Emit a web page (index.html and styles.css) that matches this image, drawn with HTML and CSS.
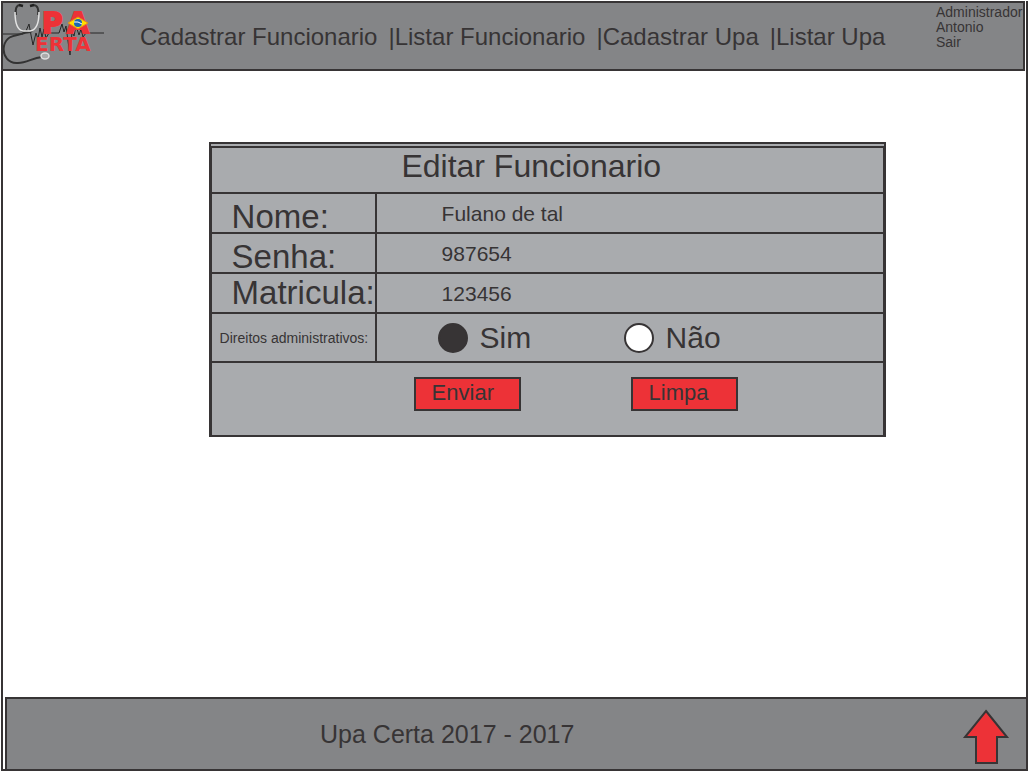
FILE: index.html
```html
<!DOCTYPE html>
<html lang="pt-BR">
<head>
<meta charset="utf-8">
<meta name="viewport" content="width=device-width, initial-scale=1">
<title>Editar Funcionario</title>
<link rel="stylesheet" href="styles.css">
</head>
<body>
<div class="page" id="topo">
  <header class="header">
    <a class="logo" href="#">
      <svg viewBox="0 0 108 66" width="108" height="66" role="img">
        <path class="pulse" d="M0 31h20l3-3 3-7 2 11 2 10 3-12 2 6 2-11 2 9 2-8 2 9 3-5h10l3-9 2 8 2-6 2 15 2 14 2-23 2 4 2-10 3 9 2-6 2 8 3-4h18"/>
        <path class="tube" d="M25 28C18 34 4 29 1 43c-2 10 5 18 14 17 9 0 14-5 24-6"/>
        <path class="tube" d="M17 2c-4 0-5 5-4 10M30 2c5 0 6 5 5 10M19 28c2 2 8 2 10 0"/>
        <path class="steel" d="M12 9c0 9 2 18 8 19h7c7-1 9-10 9-19"/>
        <path class="tips" d="M16 2l4 1M27 3l4-1"/>
        <text class="logo-top" x="39" y="30">P</text>
        <text class="logo-top" x="64" y="30">A</text>
        <path class="flag-diamond" d="M65 20l10-6 10 6-10 6z"/>
        <circle class="flag-globe" cx="75" cy="20" r="4"/>
        <path class="flag-band" d="M71 19q4-1 8 2"/>
        <text class="logo-bottom" x="32" y="48">ERTA</text>
        <ellipse class="bell" cx="42" cy="53" rx="4" ry="3"/>
      </svg>
    </a>
    <nav class="nav">
      <a href="#">Cadastrar Funcionario</a>
      <a href="#">|Listar Funcionario</a>
      <a href="#">|Cadastrar Upa</a>
      <a href="#">|Listar Upa</a>
    </nav>
    <div class="user">
      <span>Administrador</span>
      <span>Antonio</span>
      <a href="#">Sair</a>
    </div>
  </header>

  <main class="main">
    <form class="form">
      <table class="grid">
        <colgroup><col class="col-label"><col></colgroup>
        <thead>
          <tr><th class="title" colspan="2"><h1>Editar Funcionario</h1></th></tr>
        </thead>
        <tbody>
          <tr>
            <th class="label low" scope="row"><label for="nome">Nome:</label></th>
            <td><input class="field" id="nome" type="text" value="Fulano de tal"></td>
          </tr>
          <tr>
            <th class="label low" scope="row"><label for="senha">Senha:</label></th>
            <td><input class="field" id="senha" type="text" value="987654"></td>
          </tr>
          <tr>
            <th class="label" scope="row"><label for="matricula">Matricula:</label></th>
            <td><input class="field" id="matricula" type="text" value="123456"></td>
          </tr>
          <tr class="rights">
            <th class="label small" scope="row" id="direitos">Direitos administrativos:</th>
            <td>
              <div class="options" role="radiogroup" aria-labelledby="direitos">
                <label class="option"><input type="radio" name="direitos" checked>Sim</label>
                <label class="option"><input type="radio" name="direitos">Não</label>
              </div>
            </td>
          </tr>
          <tr>
            <td class="actions-cell" colspan="2">
              <div class="actions">
                <button type="submit">Enviar</button>
                <button type="reset">Limpa</button>
              </div>
            </td>
          </tr>
        </tbody>
      </table>
    </form>
  </main>

  <footer class="footer">
    <p>Upa Certa 2017 - 2017</p>
    <a class="to-top" href="#topo" aria-label="Voltar ao topo">
      <svg viewBox="0 0 48 56" width="48" height="56"><path d="M24 2L45 28H35V54H14V28H3Z"/></svg>
    </a>
  </footer>
</div>
</body>
</html>
```

FILE: styles.css
```css
:root {
  --ink: #373435;
  --bar: #848587;
  --panel: #a9abae;
  --red: #ed3237;
}

* {
  box-sizing: border-box;
}

body {
  margin: 0;
  padding: 1px 1px 0;
  background: #fff;
  color: var(--ink);
  font-family: "Liberation Sans", Arial, sans-serif;
}

a {
  color: inherit;
  text-decoration: none;
}

.page {
  display: flex;
  flex-direction: column;
  min-height: calc(100vh - 2px);
  border: 2px solid var(--ink);
  border-top: 0;
}

.header {
  display: flex;
  min-height: 70px;
  margin-right: 1px;
  background: var(--bar);
  border: 2px solid var(--ink);
  border-width: 2px 2px 2px 0;
}

.logo {
  flex: none;
  width: 137px;
}

.logo svg {
  display: block;
}

.pulse,
.tube,
.steel,
.tips,
.flag-band {
  fill: none;
}

.pulse {
  stroke: #262626;
  stroke-width: 1;
}

.tube {
  stroke: #333;
  stroke-width: 2;
}

.steel {
  stroke: #e4e4e4;
  stroke-width: 1.5;
}

.tips {
  stroke: #222;
  stroke-width: 2.5;
}

.logo-top,
.logo-bottom {
  fill: var(--red);
  font-family: "DejaVu Sans", sans-serif;
  font-weight: bold;
}

.logo-top {
  stroke: var(--red);
  stroke-width: 2;
  font-size: 28px;
}

.logo-bottom {
  font-size: 20px;
}

.flag-diamond {
  fill: #ffe000;
  stroke: #e08a20;
  stroke-width: 1;
}

.flag-globe {
  fill: #1768b3;
}

.flag-band {
  stroke: #fff;
  stroke-width: 1;
}

.bell {
  fill: #aaa;
  stroke: #ddd;
  stroke-width: 1.5;
}

.nav {
  display: flex;
  flex: 1;
  align-items: center;
  gap: 11px;
  padding-top: 2px;
  font-size: 24px;
  line-height: 28px;
  white-space: nowrap;
}

.user {
  display: flex;
  flex: none;
  flex-direction: column;
  width: 87px;
  padding-top: 2px;
  font-size: 14px;
  line-height: 15px;
}

.main {
  flex: 1;
  padding: 71px 0 40px;
}

.form {
  width: 66.2%;
  margin-left: 20.1%;
  padding-top: 2px;
  background: var(--panel);
  border: 2px solid var(--ink);
  border-bottom: 0;
}

.grid {
  width: calc(100% + 2px);
  margin: 0 -1px;
  border-collapse: collapse;
  table-layout: fixed;
}

.col-label {
  width: 165px;
}

.grid th,
.grid td {
  height: 40px;
  padding: 0;
  border: 2px solid var(--ink);
  font-weight: normal;
}

.grid .title {
  height: 46px;
}

.title h1 {
  margin: 0;
  padding-bottom: 8px;
  padding-right: 32px;
  font-size: 32px;
  font-weight: normal;
  line-height: 36px;
}

.grid .label {
  padding-left: 20px;
  font-size: 33px;
  line-height: 30px;
  text-align: left;
  white-space: nowrap;
}

.grid .low {
  vertical-align: bottom;
}

.label label {
  display: block;
}

.grid .small {
  padding-left: 8px;
  font-size: 14px;
}

.rights th,
.grid .rights td {
  height: 49px;
}

.field {
  display: block;
  width: 100%;
  height: 38px;
  padding: 2px 0 0 65px;
  border: 0;
  background: transparent;
  color: inherit;
  font-family: inherit;
  font-size: 21px;
}

.options {
  display: flex;
  padding-left: 61px;
}

.option {
  display: flex;
  flex: 0 0 186px;
  align-items: center;
  gap: 12px;
  font-size: 30px;
  line-height: 36px;
}

.option input {
  width: 30px;
  height: 30px;
  margin: 0;
  appearance: none;
  background: #fff;
  border: 2px solid var(--ink);
  border-radius: 50%;
}

.option input:checked {
  background: var(--ink);
}

.grid .actions-cell {
  height: 74px;
  vertical-align: top;
}

.actions {
  display: flex;
  gap: 110px;
  padding: 14px 0 0 202px;
}

.actions button {
  width: 107px;
  height: 34px;
  padding: 0 0 2px 16px;
  border: 2px solid var(--ink);
  border-radius: 0;
  background: var(--red);
  color: inherit;
  font-family: inherit;
  font-size: 22px;
  line-height: 26px;
  text-align: left;
}

.footer {
  display: flex;
  align-items: center;
  justify-content: space-between;
  min-height: 72px;
  margin-left: 2px;
  padding: 0 16px 0 30.6%;
  background: var(--bar);
  border-top: 2px solid var(--ink);
  border-left: 2px solid var(--ink);
}

.footer p {
  margin: 0;
  font-size: 25px;
  line-height: 30px;
}

.to-top {
  padding-top: 6px;
}

.to-top svg {
  display: block;
}

.to-top path {
  fill: var(--red);
  stroke: var(--ink);
  stroke-width: 2;
}
```
